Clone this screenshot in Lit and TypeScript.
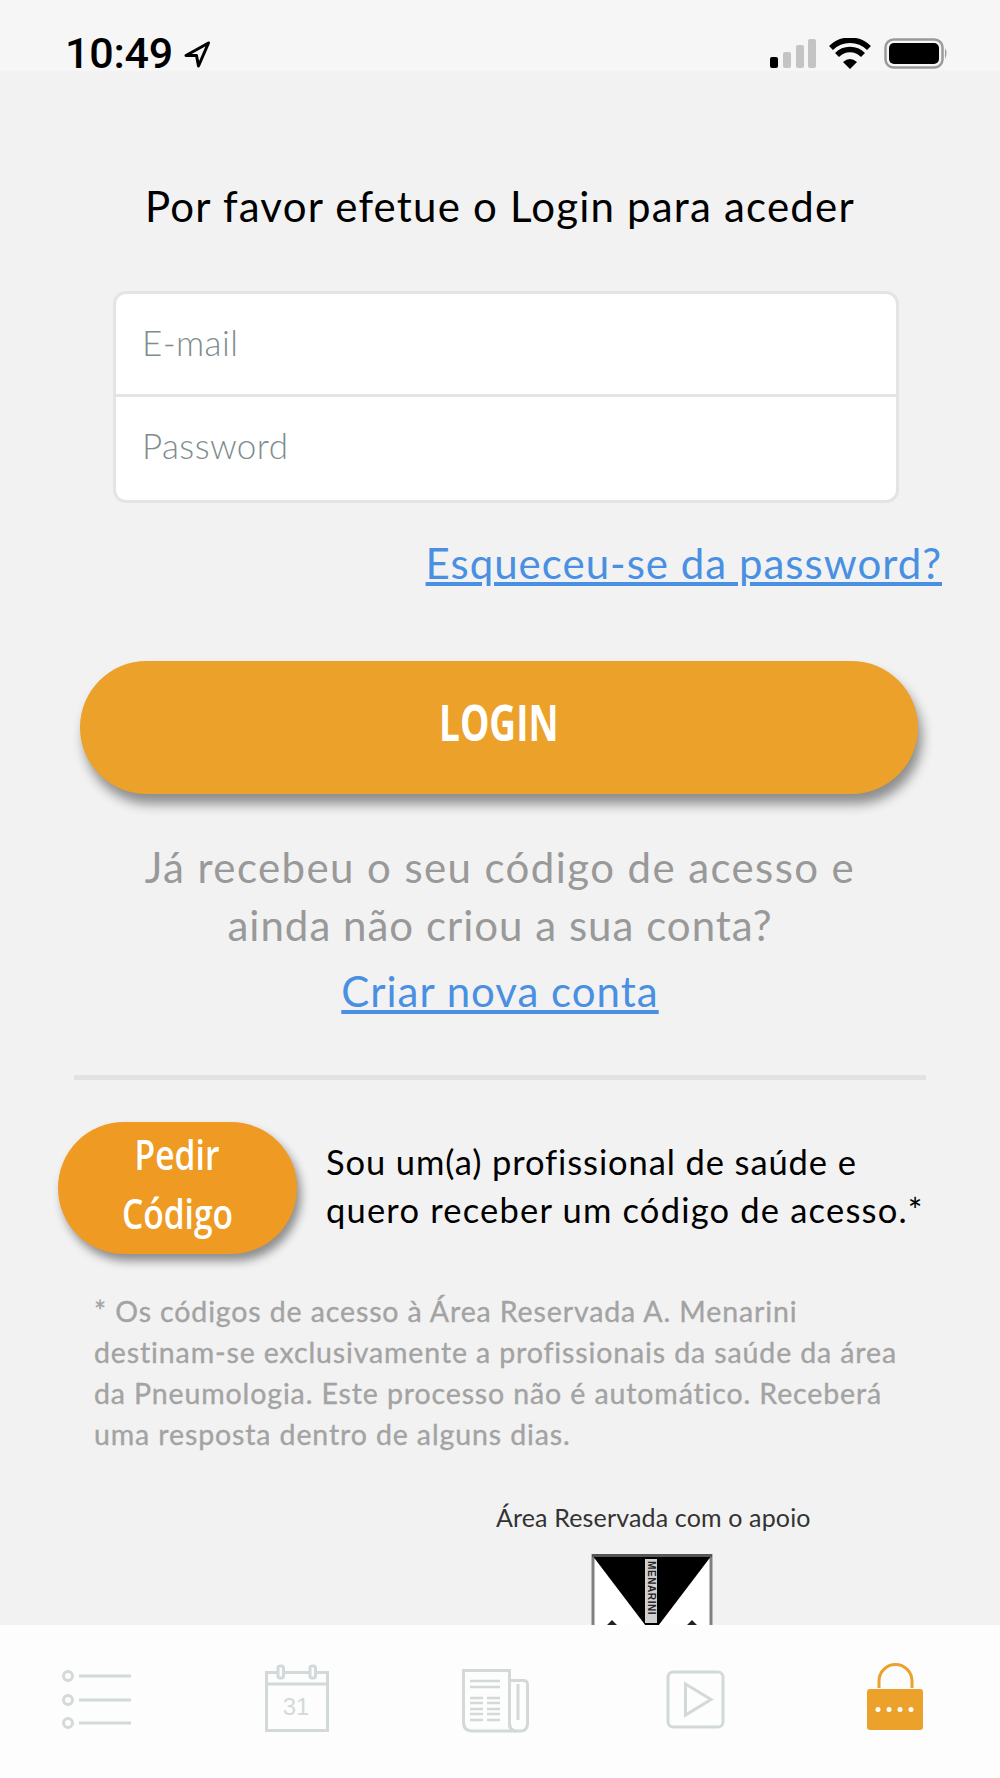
import { LitElement, html, css, svg } from "lit";
import { customElement } from "lit/decorators.js";

@customElement("app-root")
export class AppRoot extends LitElement {
  static styles = css`
    :host { display: block; width: 1000px; height: 1778px; font-family: Lato, "Open Sans", sans-serif; }
    .page { height: 1778px; display: flex; flex-direction: column; background: #f2f2f2; overflow: hidden; }
    .status { height: 71px; flex: none; background: #f6f6f6; display: flex; justify-content: space-between; padding: 0 50px 0 65px; box-sizing: border-box; align-items: flex-start; }
    .time { display: flex; align-items: center; gap: 10px; font: 500 43px/1 Roboto, sans-serif; color: #000; padding-top: 32px; letter-spacing: -0.2px; }
    .sys { padding-top: 38px; }
    .sys svg, .time svg { display: block; }
    main { flex: 1; min-height: 0; overflow: hidden; display: flex; flex-direction: column; }
    h1 { margin: 110px 0 0; font-weight: 400; font-size: 42px; line-height: 50px; color: #000; text-align: center; letter-spacing: 1.2px; }
    .form { margin: 60px 0 0 113px; width: 786px; height: 212px; box-sizing: border-box; background: #fff; border: 3px solid #e4e4e4; border-radius: 13px; }
    .field { height: 100px; box-sizing: border-box; padding: 0 0 5px 26px; display: flex; align-items: center; font-size: 35px; color: #7e8d8d; font-weight: 300; letter-spacing: 0.4px; }
    .field + .field { height: 106px; padding-bottom: 7px; border-top: 3px solid #e4e4e4; }
    a { color: #4a90e2; text-decoration: underline; }
    .forgot { margin: 35px 58px 0 0; text-align: right; font-size: 42px; line-height: 50px; letter-spacing: 1px; }
    .login { margin: 73px 0 0 80px; width: 838px; height: 133px; flex: none; box-sizing: border-box; padding-bottom: 11px; border-radius: 67px; background: #eba12a; box-shadow: 4px 10px 12px rgba(0,0,0,.42); display: flex; align-items: center; justify-content: center; color: #fff; font: 700 50px/1 "Open Sans", sans-serif; }
    .login span { display: inline-block; transform: scaleX(.74); }
    .again { margin: 44px 0 0; text-align: center; color: #999; font-size: 42px; line-height: 58px; letter-spacing: 1.4px; }
    .again .tight { letter-spacing: 1px; }
    .create { margin: 12px 0 0; text-align: center; font-size: 42px; line-height: 50px; letter-spacing: 1px; }
    hr { margin: 59px 0 0 74px; width: 852px; height: 5px; border: 0; background: #e2e2e2; flex: none; }
    .req { margin: 42px 0 0 58px; display: flex; align-items: center; gap: 29px; }
    .pedir { width: 239px; height: 132px; flex: none; box-sizing: border-box; padding-bottom: 11px; border-radius: 66px; background: #ee9a23; box-shadow: 4px 7px 10px rgba(0,0,0,.42); color: #fff; display: flex; flex-direction: column; align-items: center; justify-content: center; font: 600 42px/59px "Open Sans", sans-serif; }
    .pedir span { display: block; transform: scaleX(.8); }
    .req p { margin: 0 0 4px; font-size: 34.5px; line-height: 48px; color: #000; letter-spacing: 1.2px; white-space: nowrap; }
    .req p .tight { letter-spacing: 0.9px; }
    .note { margin: 37px 0 0 94px; width: 830px; font-size: 28.5px; line-height: 41px; color: #a3a3a3; letter-spacing: 0.88px; font-weight: 400; -webkit-text-stroke: 0.35px #a3a3a3; }
    .note div { white-space: nowrap; }
    .support { margin: 46px 0 0 496px; font-size: 25px; line-height: 32px; color: #333; letter-spacing: 0.15px; white-space: nowrap; }
    .logo { margin: 21px 0 0 591px; flex: none; display: block; }
    .mark { font: 700 10px "Liberation Sans", sans-serif; fill: #222; letter-spacing: .6px; }
    nav { height: 153px; flex: none; background: #fdfdfd; }
    nav svg { display: block; }
    .num { font: 24px "Liberation Sans", sans-serif; fill: #d3d9d9; }
  `;

  private news() {
    const rows = [1698, 1703, 1709, 1714, 1720];
    return svg`
      <path d="M463.500 1670.500h46v53q0 7.500 7 7.500h-44q-9 0-9-9z" />
      <path d="M509.500 1680.500h14q4 0 4 4v39q0 7.500-7 7.500h-4q-7 0-7-7.500z" />
      <path d="M518 1684v36" />
      <path d="M470 1681h30M470 1687h30" stroke-width="2.500" />
      ${rows.map((y) => svg`<path d="M470 ${y}h13M487 ${y}h13" stroke-width="2.500" />`)}
    `;
  }

  render() {
    return html`
      <div class="page">
        <div class="status">
          <div class="time">
            <span>10:49</span>
            <svg width="28" height="28" viewBox="0 0 28 28"><path d="M25.500 3 3 15.500h10.500l2 10.500z" fill="none" stroke="#000" stroke-width="3" stroke-linejoin="round" /></svg>
          </div>
          <div class="sys">
            <svg width="180" height="32" viewBox="770 38 180 32">
              <rect x="770" y="57" width="8" height="11" rx="2" fill="#000" />
              <rect x="783" y="52" width="8" height="16" rx="2" fill="#c4c4c4" />
              <rect x="796" y="45" width="8" height="23" rx="2" fill="#c4c4c4" />
              <rect x="808" y="39" width="8" height="29" rx="2" fill="#c4c4c4" />
              <path d="M831 48a27 27 0 0 1 38 0" fill="none" stroke="#000" stroke-width="5.500" />
              <path d="M837 55a18 18 0 0 1 26 0" fill="none" stroke="#000" stroke-width="5.500" />
              <path d="M843 62q7-6 14 0l-7 7z" fill="#000" />
              <rect x="885.500" y="39.500" width="57" height="28" rx="8" fill="none" stroke="#9a9a9a" stroke-width="2.500" />
              <rect x="889" y="43" width="50" height="21" rx="5" fill="#000" />
              <path d="M945 48q3 5 0 11z" fill="#9a9a9a" />
            </svg>
          </div>
        </div>
        <main>
          <h1>Por favor efetue o Login para aceder</h1>
          <div class="form">
            <div class="field">E-mail</div>
            <div class="field">Password</div>
          </div>
          <div class="forgot"><a>Esqueceu-se da password?</a></div>
          <div class="login"><span>LOGIN</span></div>
          <div class="again">Já recebeu o seu código de acesso e<br /><span class="tight">ainda não criou a sua conta?</span></div>
          <div class="create"><a>Criar nova conta</a></div>
          <hr />
          <div class="req">
            <div class="pedir"><span>Pedir</span><span>Código</span></div>
            <p><span class="tight">Sou um(a) profissional de saúde e</span><br />quero receber um código de acesso.*</p>
          </div>
          <div class="note">
            <div>* Os códigos de acesso à Área Reservada A. Menarini</div>
            <div>destinam-se exclusivamente a profissionais da saúde da área</div>
            <div>da Pneumologia. Este processo não é automático. Receberá</div>
            <div>uma resposta dentro de alguns dias.</div>
          </div>
          <div class="support">Área Reservada com o apoio</div>
          <svg class="logo" width="122" height="130" viewBox="0 0 122 130">
            <rect x="2" y="1.500" width="118" height="127" fill="#fff" stroke="#808080" stroke-width="3" />
            <path d="M1 1h120L61 80z" fill="#000" />
            <rect x="1" y="0" width="120" height="3" fill="#555" />
            <rect x="54" y="5" width="12" height="64" fill="#cfcfcf" />
            <text class="mark" transform="translate(56.500 7) rotate(90)">MENARINI</text>
            <path d="M21 66l5 5h-10zM101 66l5 5h-10z" fill="#222" />
          </svg>
        </main>
        <nav>
          <svg width="1000" height="153" viewBox="0 1625 1000 153">
            <g fill="none" stroke="#d3d9d9" stroke-width="3">
              <circle cx="68" cy="1676" r="4.500" /><circle cx="68" cy="1700" r="4.500" /><circle cx="68" cy="1723" r="4.500" />
              <path d="M79 1676h52M79 1700h52M79 1723h52" />
              <path d="M266.500 1672.500h61v58h-61z" />
              <path d="M266 1684h62" stroke-width="3" />
              <rect x="278" y="1666" width="5.500" height="12" rx="2" fill="#fdfdfd" />
              <rect x="310" y="1666" width="5.500" height="12" rx="2" fill="#fdfdfd" />
              ${this.news()}
              <rect x="668" y="1672" width="55" height="55" rx="5" />
              <path d="M685.500 1684 711 1699.500 685.500 1715z" />
            </g>
            <text class="num" x="296" y="1715" text-anchor="middle">31</text>
            <path d="M879 1688v-7a16.500 16.500 0 0 1 33 0v7" fill="none" stroke="#eba12a" stroke-width="3" />
            <rect x="867" y="1689" width="56" height="41" rx="3" fill="#eba12a" />
            <g fill="#fff"><circle cx="878" cy="1709.500" r="2.500" /><circle cx="889" cy="1709.500" r="2.500" /><circle cx="900" cy="1709.500" r="2.500" /><circle cx="911" cy="1709.500" r="2.500" /></g>
          </svg>
        </nav>
      </div>
    `;
  }
}
